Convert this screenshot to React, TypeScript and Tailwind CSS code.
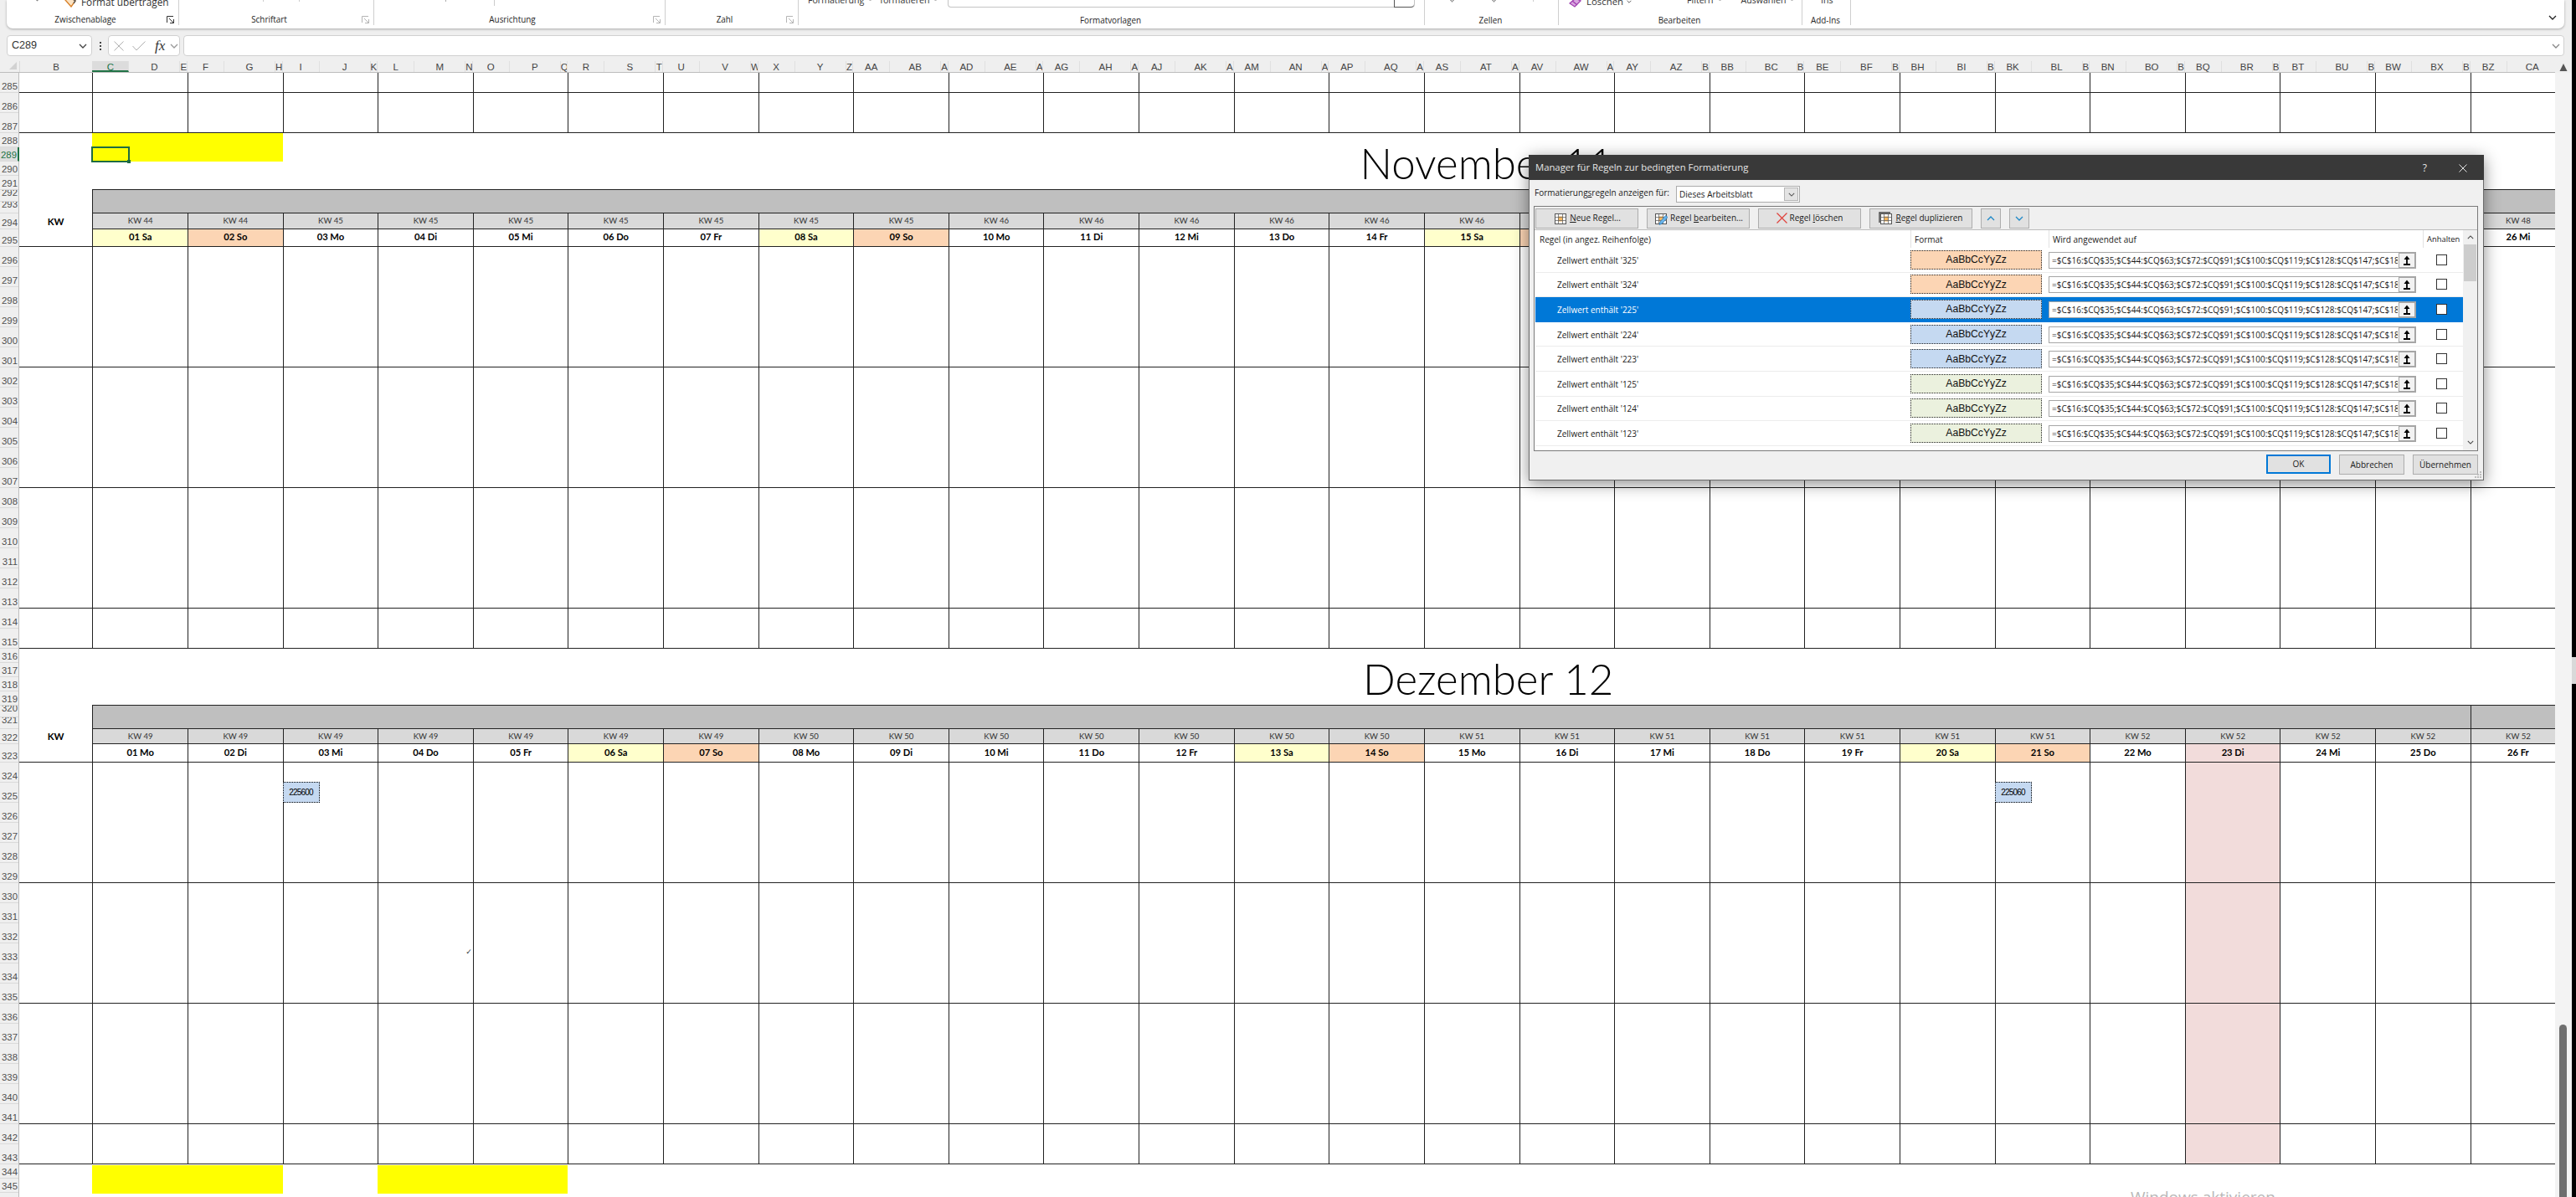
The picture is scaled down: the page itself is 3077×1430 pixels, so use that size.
import { ReactNode } from "react";
import { clsx } from "clsx";

type Fill = "sat" | "sun" | "holiday" | "none";

interface Day {
  label: string;
  week: string;
  fill: Fill;
}

interface Rule {
  value: string;
  color: string;
}

const WEEKDAYS = ["Mo", "Di", "Mi", "Do", "Fr", "Sa", "So"];
const DAY_COUNT = 26;
const RANGE =
  "=$C$16:$CQ$35;$C$44:$CQ$63;$C$72:$CQ$91;$C$100:$CQ$119;$C$128:$CQ$147;$C$184";

const RULES: Rule[] = [
  { value: "325", color: "bg-[#fcd5b4]" },
  { value: "324", color: "bg-[#fcd5b4]" },
  { value: "225", color: "bg-[#c5d9f1]" },
  { value: "224", color: "bg-[#c5d9f1]" },
  { value: "223", color: "bg-[#c5d9f1]" },
  { value: "125", color: "bg-[#ebf1de]" },
  { value: "124", color: "bg-[#ebf1de]" },
  { value: "123", color: "bg-[#ebf1de]" },
];

function buildDays(firstWeekday: number, firstWeek: number, holiday?: number): Day[] {
  return Array.from({ length: DAY_COUNT }, (_, i) => {
    const weekday = (firstWeekday + i) % 7;
    const week = firstWeek + Math.floor((firstWeekday + i) / 7);
    let fill: Fill = "none";
    if (weekday === 5) fill = "sat";
    if (weekday === 6) fill = "sun";
    if (holiday === i + 1) fill = "holiday";
    return {
      label: `${String(i + 1).padStart(2, "0")} ${WEEKDAYS[weekday]}`,
      week: `KW ${week}`,
      fill,
    };
  });
}

const NOVEMBER = buildDays(5, 44);
const DECEMBER = buildDays(0, 49, 23);

function columnName(index: number): string {
  const letter = (n: number) => String.fromCharCode(65 + n);
  return index < 26 ? letter(index) : letter(Math.floor(index / 26) - 1) + letter(index % 26);
}

function rowHeight(row: number): string {
  if ([292, 293, 320, 321].includes(row)) return "h-[14px]";
  if (row === 294) return "h-[19px]";
  if (row === 322) return "h-[18px]";
  if (row === 295) return "h-[21px]";
  if (row === 323) return "h-[22px]";
  if ((row >= 288 && row <= 291) || (row >= 316 && row <= 319) || row >= 344) return "h-[17px]";
  return "h-[24px]";
}

function Chevron({ className, up = false }: { className: string; up?: boolean }) {
  return (
    <svg viewBox="0 0 10 6" className={className} fill="none" stroke="currentColor" strokeWidth="1.3">
      <path d={up ? "M1 5 L5 1 L9 5" : "M1 1 L5 5 L9 1"} />
    </svg>
  );
}

function Launcher({ active = false }: { active?: boolean }) {
  return (
    <svg
      viewBox="0 0 9 9"
      className={clsx("h-[9px] w-[9px]", active ? "text-[#333]" : "text-[#b5b5b5]")}
      fill="none"
      stroke="currentColor"
    >
      <path d="M0.5 8 V0.5 H8 M3 3 L8 8 M8.5 4 V8.5 H4" />
    </svg>
  );
}

interface RibbonGroupProps {
  label: string;
  width: string;
  launcher?: "on" | "off";
  low?: boolean;
  children?: ReactNode;
}

function RibbonGroup({ label, width, launcher, low, children }: RibbonGroupProps) {
  return (
    <div className={clsx("flex h-[30px] shrink-0 flex-col", width)}>
      <div className="flex h-[17px] border-r border-[#cfcfcf] text-[10.6px] leading-[14px] text-[#333]">
        {children}
      </div>
      <div className="flex h-[13px] items-center border-r border-[#cfcfcf]">
        <span
          className={clsx(
            "grow text-center text-[9.9px] leading-[13px] text-[#262626]",
            low ? "pt-[2px] pr-[2px]" : "pr-[3px]"
          )}
        >
          {label}
        </span>
        {launcher && (
          <span className="mr-[2px] flex w-[12px] items-center">
            <Launcher active={launcher === "on"} />
          </span>
        )}
      </div>
    </div>
  );
}

function Ribbon() {
  return (
    <div className="ml-2 flex h-[34px] w-[3055px] overflow-hidden rounded-b-[7px] bg-white shadow-[0_1px_3px_rgba(0,0,0,0.3)]">
      <RibbonGroup label="Zwischenablage" width="w-[206px]" launcher="on">
        <Chevron className="-mt-[3px] ml-[33px] h-[5px] w-[7px]" />
        <svg viewBox="0 0 16 12" className="-mt-[3px] ml-[28px] h-[12px] w-[16px]" fill="none">
          <path d="M2 3 L8 0 L14 4 L9 11 Z" fill="#fbe3c4" stroke="#d9822b" strokeWidth="1.4" />
          <path d="M8 0 L14 4 L12 7" stroke="#555" strokeWidth="1.4" />
        </svg>
        <span className="-mt-[5px] ml-[5px] text-[11.8px] whitespace-nowrap">Format übertragen</span>
      </RibbonGroup>
      <RibbonGroup label="Schriftart" width="w-[233px]" launcher="off">
        <span className="ml-[100px] h-[2px] w-px bg-[#ccc]" />
        <span className="ml-[42px] h-[2px] w-px bg-[#ccc]" />
      </RibbonGroup>
      <RibbonGroup label="Ausrichtung" width="w-[348px]" launcher="off">
        <span className="ml-[85px] h-[2px] w-px bg-[#aaa]" />
        <span className="ml-[57px] h-[7px] w-px bg-[#ccc]" />
      </RibbonGroup>
      <RibbonGroup label="Zahl" width="w-[159px]" launcher="off" />
      <RibbonGroup label="Formatvorlagen" width="w-[748px]" low>
        <span className="-mt-[7px] ml-[11px]">Formatierung</span>
        <Chevron className="-mt-[2px] ml-[5px] h-[4px] w-[5px] text-[#777]" />
        <span className="-mt-[7px] ml-[9px]">formatieren</span>
        <Chevron className="-mt-[2px] ml-[5px] h-[4px] w-[5px] text-[#777]" />
        <div className="mr-[11px] ml-auto flex h-[9px] w-[558px] justify-end rounded-b-[4px] border border-t-0 border-[#c4c4c4]">
          <span className="-mb-px w-[24px] rounded-br-[4px] border-b border-l border-[#555]" />
        </div>
      </RibbonGroup>
      <RibbonGroup label="Zellen" width="w-[160px]" low>
        <Chevron className="-mt-[2px] ml-[29px] h-[5px] w-[7px]" />
        <Chevron className="-mt-[2px] ml-[43px] h-[5px] w-[7px]" />
        <span className="ml-[43px] h-[2px] w-px bg-[#ccc]" />
      </RibbonGroup>
      <RibbonGroup label="Bearbeiten" width="w-[291px]" low>
        <svg viewBox="0 0 16 12" className="-mt-[3px] ml-[12px] h-[12px] w-[16px]" fill="none">
          <path d="M1 7 L8 1 L14 4 L7 11 Z" fill="#d9a5e0" stroke="#a03fb0" strokeWidth="1.3" />
          <path d="M4 4 L10 9" stroke="#a03fb0" strokeWidth="1.3" />
        </svg>
        <span className="-mt-[5px] ml-[5px] text-[11.4px]">Löschen</span>
        <Chevron className="mt-0 ml-[4px] h-[4px] w-[6px]" />
        <span className="-mt-[7px] ml-[66px]">Filtern</span>
        <Chevron className="-mt-[2px] ml-[6px] h-[4px] w-[5px] text-[#777]" />
        <span className="-mt-[7px] ml-[22px]">Auswählen</span>
        <Chevron className="-mt-[2px] ml-[5px] h-[4px] w-[5px] text-[#777]" />
      </RibbonGroup>
      <RibbonGroup label="Add-Ins" width="w-[58px]" low>
        <span className="-mt-[7px] ml-[22px]">Ins</span>
      </RibbonGroup>
      <Chevron className="mt-[18px] mr-[9px] ml-auto h-[6px] w-[10px] text-[#222]" />
    </div>
  );
}

function FormulaBar() {
  return (
    <div className="mt-[8px] flex h-[25px] pl-2">
      <div className="flex w-[102px] items-center justify-between rounded-[4px] border border-[#d0d0d0] bg-white pr-[5px] pl-[5px]">
        <span className="font-['Liberation_Sans',sans-serif] text-[12.6px] text-[#333]">C289</span>
        <Chevron className="h-[6px] w-[10px] text-[#444]" />
      </div>
      <div className="flex w-[19px] flex-col items-center justify-center gap-[2px]">
        <span className="h-[2px] w-[2px] bg-[#444]" />
        <span className="h-[2px] w-[2px] bg-[#444]" />
        <span className="h-[2px] w-[2px] bg-[#444]" />
      </div>
      <div className="flex w-[86px] items-center rounded-[4px] border border-[#d0d0d0] bg-white pl-[6px]">
        <svg viewBox="0 0 12 12" className="h-[12px] w-[12px]" fill="none" stroke="#b0b0b0">
          <path d="M0.5 0.5 L11.5 11.5 M11.5 0.5 L0.5 11.5" />
        </svg>
        <svg viewBox="0 0 16 12" className="ml-[10px] h-[12px] w-[16px]" fill="none" stroke="#b0b0b0">
          <path d="M0.5 6 L5 11 L15.5 0.5" />
        </svg>
        <span className="ml-[11px] w-[17px] font-['Liberation_Serif',serif] text-[17px] leading-[18px] text-[#333] italic">
          fx
        </span>
        <Chevron className="ml-px h-[6px] w-[10px] text-[#999]" />
      </div>
      <div className="ml-[4px] flex w-[2844px] items-center justify-end rounded-[4px] border border-[#d0d0d0] bg-white pr-[4px]">
        <Chevron className="h-[6px] w-[10px] text-[#888]" />
      </div>
    </div>
  );
}

function ColumnLetters() {
  const widths = ["w-[44px]", "w-[61px]", "w-[8.62px]"];
  return (
    <div className="mt-[6px] flex h-[14px] border-b border-[#bdbdbd] font-['Liberation_Sans',sans-serif] text-[11.5px] leading-[14px] text-[#444]">
      <div className="flex w-[24px] shrink-0 items-end justify-end border-r border-[#dadada] pr-[3px] pb-[3px]">
        <svg viewBox="0 0 9 9" className="h-[9px] w-[9px]">
          <path d="M9 0 V9 H0 Z" fill="#d2d2d2" />
        </svg>
      </div>
      <div className="w-[86.4px] shrink-0 text-center">B</div>
      <div className="flex w-[2941px] overflow-hidden">
        {Array.from({ length: DAY_COUNT * 3 }, (_, i) => {
          const name = columnName(i + 2);
          const narrow = i % 3 === 2;
          return (
            <div
              key={name}
              className={clsx(
                "shrink-0 overflow-hidden border-r border-[#e0e0e0] text-center",
                widths[i % 3],
                narrow && name.length > 1 && "text-left",
                i === 0 && "border-b-2 border-b-[#217346] bg-[#dcdcdc] text-[#217346]"
              )}
            >
              {name}
            </div>
          );
        })}
      </div>
    </div>
  );
}

function RowNumbers() {
  const rows = Array.from({ length: 61 }, (_, i) => 285 + i);
  return (
    <div className="w-[23px] shrink-0 border-r border-[#bdbdbd] bg-[#efefef] font-['Liberation_Sans',sans-serif] text-[11.4px] text-[#505050]">
      {rows.map((row) => {
        const short = [292, 293, 320, 321].includes(row);
        return (
          <div
            key={row}
            className={clsx(
              "flex items-end justify-end overflow-hidden border-b border-[#dadada] pr-px",
              rowHeight(row),
              short && "pb-[3px]",
              row === 289 && "-mr-px border-r-2 border-r-[#217346] bg-[#dedede] text-[#217346]"
            )}
          >
            <span className="leading-[14px]">{row}</span>
          </div>
        );
      })}
    </div>
  );
}

interface BandProps {
  height: string;
  marks?: Record<number, ReactNode>;
  shaded?: number;
}

// One strip of empty day cells, closed by a horizontal rule.
function Band({ height, marks = {}, shaded }: BandProps) {
  return (
    <div className={clsx("flex shrink-0 border-b border-[#222]", height)}>
      <div className="w-[87.4px] shrink-0" />
      {Array.from({ length: DAY_COUNT }, (_, i) => (
        <div
          key={i}
          className={clsx("w-[113.62px] shrink-0 border-l border-[#222]", shaded === i + 1 && "bg-[#f2dcdb]")}
        >
          {marks[i + 1]}
        </div>
      ))}
    </div>
  );
}

function Chip({ text }: { text: string }) {
  return (
    <div className="mt-[23px] -ml-px flex h-[25px] w-[44px] items-center justify-center border border-dotted border-black bg-[#c5d9f1]">
      <span className="font-['Liberation_Sans',sans-serif] text-[10px] tracking-[-0.8px] text-black">{text}</span>
    </div>
  );
}

const dayFills: Record<Fill, string> = {
  sat: "bg-[#ffffcc]",
  sun: "bg-[#fcd5b4]",
  holiday: "bg-[#f2dcdb]",
  none: "bg-white",
};

interface MonthHeaderProps {
  days: Day[];
  weekHeight: string;
  dayHeight: string;
  split?: boolean;
}

function MonthHeader({ days, weekHeight, dayHeight, split }: MonthHeaderProps) {
  return (
    <div className="shrink-0">
      <div className="-mt-px ml-[87.4px] flex h-[29px] border-t border-b border-l border-[#222] bg-[#bfbfbf]">
        {split && <div className="ml-[2839.5px] border-l border-[#222]" />}
      </div>
      <div className={clsx("flex", weekHeight)}>
        <div className="flex w-[87.4px] shrink-0 items-center justify-center text-[11.4px] font-bold">KW</div>
        {days.map((day) => (
          <div
            key={day.label}
            className="flex w-[113.62px] shrink-0 items-center justify-center border-b border-l border-[#222] bg-[#d9d9d9] text-[9.6px] leading-none text-[#333]"
          >
            {day.week}
          </div>
        ))}
      </div>
      <div className={clsx("flex border-b border-[#222]", dayHeight)}>
        <div className="w-[87.4px] shrink-0" />
        {days.map((day) => (
          <div
            key={day.label}
            className={clsx(
              "flex w-[113.62px] shrink-0 items-center justify-center border-l border-[#222] pb-[2px] text-[11.2px] leading-none font-bold text-black",
              dayFills[day.fill]
            )}
          >
            {day.label}
          </div>
        ))}
      </div>
    </div>
  );
}

function Title({ text, className }: { text: string; className: string }) {
  return (
    <span className={clsx("pt-[2px] text-[51px] leading-[68px] font-light whitespace-nowrap text-black", className)}>
      {text}
    </span>
  );
}

function Sheet() {
  return (
    <div className="flex w-[3028.5px] flex-col overflow-hidden bg-white font-['Lato','Open_Sans',sans-serif]">
      <Band height="h-[24px]" />
      <Band height="h-[48px]" />
      <div className="flex h-[68px] shrink-0">
        <div className="relative ml-[87.4px] h-[34px] w-[227.2px] shrink-0 bg-[#ffff00]">
          <div className="absolute top-[16px] -left-px h-[19px] w-[46px] border-2 border-[#1e6b41]" />
          <div className="absolute top-[32px] left-[42px] h-[4px] w-[4px] bg-[#1e6b41]" />
        </div>
        <Title text="November 11" className="ml-[1287px]" />
      </div>
      <MonthHeader days={NOVEMBER} weekHeight="h-[19px]" dayHeight="h-[21px]" />
      <Band height="h-[144px]" />
      <Band height="h-[144px]" />
      <Band height="h-[144px]" />
      <Band height="h-[48px]" />
      <div className="flex h-[68px] shrink-0">
        <Title text="Dezember 12" className="ml-[1605px]" />
      </div>
      <MonthHeader days={DECEMBER} weekHeight="h-[18px]" dayHeight="h-[22px]" split />
      <Band
        height="h-[144px]"
        shaded={23}
        marks={{ 3: <Chip text="225600" />, 21: <Chip text="225060" /> }}
      />
      <Band
        height="h-[144px]"
        shaded={23}
        marks={{
          4: <div className="mt-[76px] mr-px text-right font-['DejaVu_Sans',sans-serif] text-[9px] text-[#333]">✓</div>,
        }}
      />
      <Band height="h-[144px]" shaded={23} />
      <Band height="h-[48px]" shaded={23} />
      <div className="flex h-[39px] shrink-0 pt-px">
        <div className="ml-[87.4px] h-[34px] w-[227.2px] shrink-0 bg-[#ffff00]" />
        <div className="ml-[113.6px] h-[34px] w-[227.2px] shrink-0 bg-[#ffff00]" />
      </div>
    </div>
  );
}

function GridIcon({ kind }: { kind: "new" | "edit" | "copy" }) {
  return (
    <svg viewBox="0 0 17 16" className="h-[16px] w-[17px] shrink-0" fill="none">
      {kind === "copy" && <path d="M1 13 V1 H14" stroke="#444" strokeWidth="1.4" />}
      <rect x="2.5" y="2.5" width="13" height="12" fill="#fff" stroke="#555" />
      <rect x="6" y="5.5" width="6" height="6" fill="#f9b85c" />
      <path d="M6.5 2.5 V14.5 M11.5 2.5 V14.5 M2.5 6.5 H15.5 M2.5 10.5 H15.5" stroke="#666" strokeWidth="0.8" />
      {kind === "edit" && (
        <path d="M7 15.5 L8 12 L14.5 4.5 L17 6.5 L10.5 14 Z" fill="#6cb4e8" stroke="#2b7fc0" strokeWidth="0.8" />
      )}
    </svg>
  );
}

const buttonBox = "flex h-[24px] shrink-0 items-center justify-center border border-[#adadad] bg-[#e1e1e1]";

function ToolButton({ children }: { children: ReactNode }) {
  return <div className={clsx(buttonBox, "w-[123px] gap-[3px] whitespace-nowrap")}>{children}</div>;
}

function RuleRow({ rule, selected }: { rule: Rule; selected: boolean }) {
  return (
    <div
      className={clsx(
        "flex h-[29.6px] items-center border-b",
        selected ? "border-[#0078d7] bg-[#0078d7] text-white" : "border-[#ececec] text-[#1a1a1a]"
      )}
    >
      <span className="w-[448px] shrink-0 pt-[2px] pl-[26px]">Zellwert enthält '{rule.value}'</span>
      <div
        className={clsx(
          "flex h-[23px] w-[157px] shrink-0 items-center justify-center border border-dotted border-[#222] font-['Liberation_Sans',sans-serif] text-[12.2px] text-[#111]",
          rule.color
        )}
      >
        AaBbCcYyZz
      </div>
      <div className="mt-px ml-[8px] flex h-[20px] w-[439px] shrink-0 border border-[#a6a6a6] bg-white text-[#1a1a1a]">
        <span className="w-[417px] shrink-0 pl-[3px] leading-[19px] whitespace-nowrap">
          <span className="block w-[413px] overflow-hidden">{RANGE}</span>
        </span>
        <span className="flex grow items-center justify-center border border-[#a6a6a6] bg-[#f2f2f2]">
          <svg viewBox="0 0 10 12" className="h-[12px] w-[10px]" fill="none" stroke="#000" strokeWidth="1.8">
            <path d="M1 11 H9 M5 10 V2" />
            <path d="M1.5 5 L5 0.5 L8.5 5 Z" fill="#000" stroke="none" />
          </svg>
        </span>
      </div>
      <div className="ml-[24px] h-[13px] w-[13px] border border-[#333] bg-white" />
    </div>
  );
}

function RulesDialog() {
  return (
    <div className="absolute top-[185px] left-[1826px] flex h-[389px] w-[1141px] flex-col border border-[#6b6b6b] bg-[#f0f0f0] text-[10px] text-[#1a1a1a] shadow-[0_4px_18px_rgba(0,0,0,0.45)]">
      <div className="-mx-px -mt-px flex h-[30px] shrink-0 items-center bg-[#393939] pt-px pl-[8px] text-[#e6e6e6]">
        <span className="grow text-[11.3px]">Manager für Regeln zur bedingten Formatierung</span>
        <span className="text-[12px]">?</span>
        <svg viewBox="0 0 10 10" className="mr-[20px] ml-[38px] h-[10px] w-[10px]" fill="none" stroke="#e6e6e6">
          <path d="M0.5 0.5 L9.5 9.5 M9.5 0.5 L0.5 9.5" />
        </svg>
      </div>
      <div className="flex h-[31px] shrink-0 pt-[7px] pl-[6px]">
        <span className="w-[169px] shrink-0 pt-px leading-[14px] whitespace-nowrap">
          Formatierung<u>s</u>regeln anzeigen für:
        </span>
        <div className="flex h-[20px] w-[148px] items-center justify-between border border-[#acacac] bg-white p-px pl-[3px]">
          <span>Dieses Arbeitsblatt</span>
          <span className="flex h-full w-[17px] items-center justify-center border border-[#b5b5b5] bg-[#e3e3e3]">
            <Chevron className="h-[5px] w-[8px] text-[#555]" />
          </span>
        </div>
      </div>
      <div className="mr-[6px] ml-[5px] flex h-[293px] shrink-0 flex-col border border-[#7a7a7a]">
        <div className="flex h-[28px] shrink-0 items-center gap-[10px] border-b border-[#bcbcbc] pl-[1px]">
          <ToolButton>
            <GridIcon kind="new" />
            <span><u>N</u>eue Regel...</span>
          </ToolButton>
          <ToolButton>
            <GridIcon kind="edit" />
            <span>Regel <u>b</u>earbeiten...</span>
          </ToolButton>
          <ToolButton>
            <svg viewBox="0 0 13 13" className="h-[13px] w-[13px]" fill="none" stroke="#e0443e" strokeWidth="1.3">
              <path d="M0.5 0.5 L12.5 12.5 M12.5 0.5 L0.5 12.5" />
            </svg>
            <span>Regel <u>l</u>öschen</span>
          </ToolButton>
          <ToolButton>
            <GridIcon kind="copy" />
            <span><u>R</u>egel duplizieren</span>
          </ToolButton>
          <div className={clsx(buttonBox, "w-[24px]")}>
            <Chevron up className="h-[6px] w-[10px] text-[#1e88c7]" />
          </div>
          <div className={clsx(buttonBox, "w-[24px]")}>
            <Chevron className="h-[6px] w-[10px] text-[#1e88c7]" />
          </div>
        </div>
        <div className="flex min-h-0 grow bg-white pl-px">
          <div className="w-[1108px] shrink-0">
            <div className="flex h-[21px] leading-[22px]">
              <span className="w-[448px] pl-[5px]">Regel (in angez. Reihenfolge)</span>
              <span className="w-[165px] border-l border-[#e2e2e2] pl-[4px]">Format</span>
              <span className="w-[447px] border-l border-[#e2e2e2] pl-[4px]">Wird angewendet auf</span>
              <span className="border-l border-[#e2e2e2] pl-[4px] text-[9.4px]">Anhalten</span>
            </div>
            {RULES.map((rule) => (
              <RuleRow key={rule.value} rule={rule} selected={rule.value === "225"} />
            ))}
          </div>
          <div className="flex w-[17px] flex-col items-center bg-[#f0f0f0] text-[#444]">
            <Chevron up className="mt-[6px] h-[5px] w-[8px]" />
            <div className="mt-[6px] h-[44px] w-[15px] bg-[#cdcdcd]" />
            <Chevron className="mt-auto mb-[7px] h-[5px] w-[8px]" />
          </div>
        </div>
      </div>
      <div className="flex shrink-0 justify-end gap-[10px] pt-[4px] pr-[6px]">
        <div className="flex h-[23px] w-[77px] items-center justify-center border-2 border-[#0078d7] bg-[#e1e1e1]">OK</div>
        <div className={clsx(buttonBox, "w-[78px]")}>Abbrechen</div>
        <div className={clsx(buttonBox, "w-[78px]")}>Übernehmen</div>
      </div>
      <svg viewBox="0 0 9 9" className="absolute right-px bottom-px h-[9px] w-[9px]" fill="#bcbcbc">
        <path d="M6 0h2v2h-2zM3 3h2v2h-2zM6 3h2v2h-2zM0 6h2v2h-2zM3 6h2v2h-2zM6 6h2v2h-2z" />
      </svg>
    </div>
  );
}

function ScrollRail() {
  return (
    <div className="flex w-[20px] flex-col items-center bg-[#f3f3f3]">
      <div className="mt-[1137px] w-[9px] grow rounded-t-[5px] bg-[#6e6e6e]" />
    </div>
  );
}

export default function App() {
  return (
    <div className="relative flex h-[1430px] w-[3077px] overflow-hidden bg-[#efefef] font-['Open_Sans','Noto_Sans',sans-serif]">
      <div className="flex w-[3072px] flex-col">
        <Ribbon />
        <FormulaBar />
        <div className="flex">
          <div className="w-[3051.5px] shrink-0">
            <ColumnLetters />
          </div>
          <svg viewBox="0 0 10 10" className="mt-[9px] ml-[5px] h-[10px] w-[10px]">
            <path d="M5 0 L9.5 9 H0.5 Z" fill="#555" />
          </svg>
        </div>
        <div className="flex min-h-0 grow overflow-hidden">
          <RowNumbers />
          <Sheet />
          <ScrollRail />
        </div>
      </div>
      <div className="flex w-[5px] flex-col bg-black">
        <div className="mt-[785px] h-[32px] bg-[#d9d9d9]" />
      </div>
      <RulesDialog />
      <div className="absolute top-[1416px] left-[2545px] text-[19px] leading-[28px] whitespace-nowrap text-[#b8b8b8]">
        Windows aktivieren
      </div>
    </div>
  );
}
